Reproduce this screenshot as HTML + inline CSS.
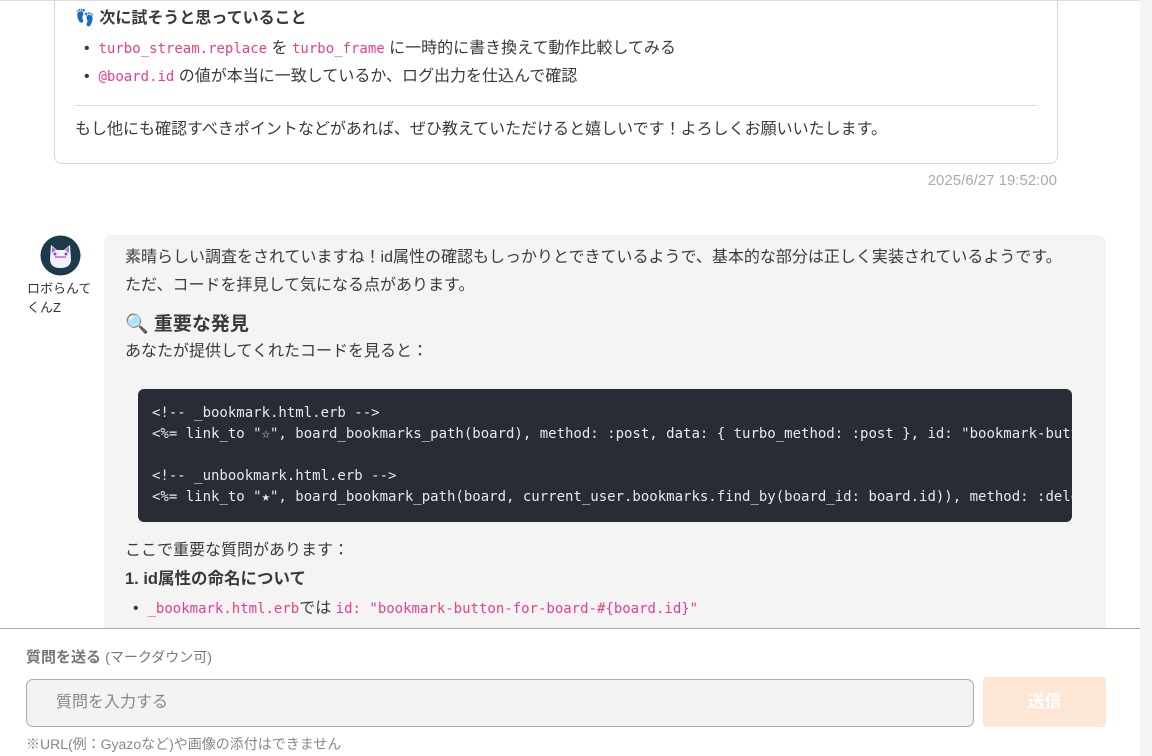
<!DOCTYPE html>
<html><head><meta charset="utf-8"><style>
*{box-sizing:border-box;margin:0;padding:0}
body{width:1152px;height:756px;overflow:hidden;background:#fff;font-family:"Liberation Sans","Noto Sans CJK JP",sans-serif;color:#3a3a3a;position:relative}
.mono{font-family:"DejaVu Sans Mono","Liberation Mono",monospace}
.abs{position:absolute;white-space:nowrap}
.pink{color:#e83e8c;font-size:14px}
.sb{position:absolute;left:1140px;top:0;width:12px;height:756px;background:#f4f4f4}
</style></head><body>
<div style="position:absolute;left:0;top:0;width:1140px;height:1px;background:#ddd"></div>
<div class="sb"></div>
<div style="position:absolute;left:54px;top:-10px;width:1004px;height:174px;border:1px solid #d6d6d6;border-radius:8px"></div>
<div class="abs" style="left:75px;top:8px;font-size:16px;font-weight:bold;line-height:22px">👣 次に試そうと思っていること</div>
<div class="abs" style="left:84px;top:38px;font-size:16px;line-height:22px">•&nbsp;&nbsp;<span class="mono pink">turbo_stream.replace</span> を <span class="mono pink">turbo_frame</span> に一時的に書き換えて動作比較してみる</div>
<div class="abs" style="left:84px;top:66px;font-size:16px;line-height:22px">•&nbsp;&nbsp;<span class="mono pink">@board.id</span> の値が本当に一致しているか、ログ出力を仕込んで確認</div>
<div style="position:absolute;left:75px;top:105px;width:962px;height:1px;background:#ddd"></div>
<div class="abs" style="left:75px;top:119px;font-size:16px;line-height:22px">もし他にも確認すべきポイントなどがあれば、ぜひ教えていただけると嬉しいです！よろしくお願いいたします。</div>
<div class="abs" style="left:880px;width:177px;text-align:right;top:172px;font-size:15px;color:#aaa">2025/6/27 19:52:00</div>

<svg style="position:absolute;left:40px;top:235px" width="41" height="41" viewBox="0 0 41 41">
<circle cx="20.5" cy="20.5" r="20" fill="#1d3a4a"/>
<path d="M10 24 L11 10 L17 15 L24 15 L30 10 L31 24 Q31 33 20.5 33 Q10 33 10 24Z" fill="#f4f0fb"/>
<path d="M12 12 L16 15 L12 18Z M29 12 L25 15 L29 18Z" fill="#a070e0"/>
<rect x="15" y="21" width="11" height="2" fill="#c090e0"/>
<circle cx="15" cy="19" r="1.5" fill="#8050c0"/><circle cx="26" cy="19" r="1.5" fill="#8050c0"/>
</svg>
<div class="abs" style="left:27px;top:279px;font-size:13px;line-height:19px;color:#333">ロボらんて<br>くんZ</div>

<div style="position:absolute;left:104px;top:235px;width:1002px;height:420px;background:#f4f4f4;border-radius:8px"></div>
<div class="abs" style="left:125px;top:244px;font-size:16px;line-height:28px">素晴らしい調査をされていますね！id属性の確認もしっかりとできているようで、基本的な部分は正しく実装されているようです。<br>ただ、コードを拝見して気になる点があります。</div>
<div class="abs" style="left:125px;top:312px;font-size:19px;font-weight:bold;line-height:26px">🔍 重要な発見</div>
<div class="abs" style="left:125px;top:341px;font-size:16px;line-height:22px">あなたが提供してくれたコードを見ると：</div>
<div style="position:absolute;left:138px;top:389px;width:934px;height:133px;background:#282c34;border-radius:6px;overflow:hidden">
<pre class="mono" style="position:absolute;left:14px;top:14px;font-size:14px;line-height:21px;color:#e8e8e8">&lt;!-- _bookmark.html.erb --&gt;
&lt;%= link_to "☆", board_bookmarks_path(board), method: :post, data: { turbo_method: :post }, id: "bookmark-button-for-board-#{board.id}" %&gt;

&lt;!-- _unbookmark.html.erb --&gt;
&lt;%= link_to "★", board_bookmark_path(board, current_user.bookmarks.find_by(board_id: board.id)), method: :delete %&gt;</pre></div>
<div class="abs" style="left:125px;top:540px;font-size:16px;line-height:22px">ここで重要な質問があります：</div>
<div class="abs" style="left:125px;top:568px;font-size:16.5px;font-weight:bold;line-height:22px">1. id属性の命名について</div>
<div class="abs" style="left:133px;top:598px;font-size:16px;line-height:22px">•&nbsp;&nbsp;<span class="mono pink">_bookmark.html.erb</span>では <span class="mono pink">id: "bookmark-button-for-board-#{board.id}"</span></div>

<div style="position:absolute;left:0;top:628px;width:1140px;height:128px;background:#fff;border-top:1px solid #aaa"></div>
<div class="abs" style="left:26px;top:647px;font-size:15px;font-weight:bold;color:#777;line-height:20px">質問を送る <span style="font-weight:normal;font-size:14px">(マークダウン可)</span></div>
<div style="position:absolute;left:26px;top:679px;width:948px;height:48px;background:#f2f3f2;border:1px solid #aaa;border-radius:7px"></div>
<div class="abs" style="left:56px;top:693px;font-size:16px;color:#888;line-height:20px">質問を入力する</div>
<div style="position:absolute;left:983px;top:677px;width:123px;height:50px;background:#fde6d4;border-radius:4px;color:#fff;font-weight:bold;font-size:17px;text-align:center;line-height:50px">送信</div>
<div class="abs" style="left:26px;top:735px;font-size:14px;color:#888;line-height:18px">※URL(例：Gyazoなど)や画像の添付はできません</div>
</body></html>
